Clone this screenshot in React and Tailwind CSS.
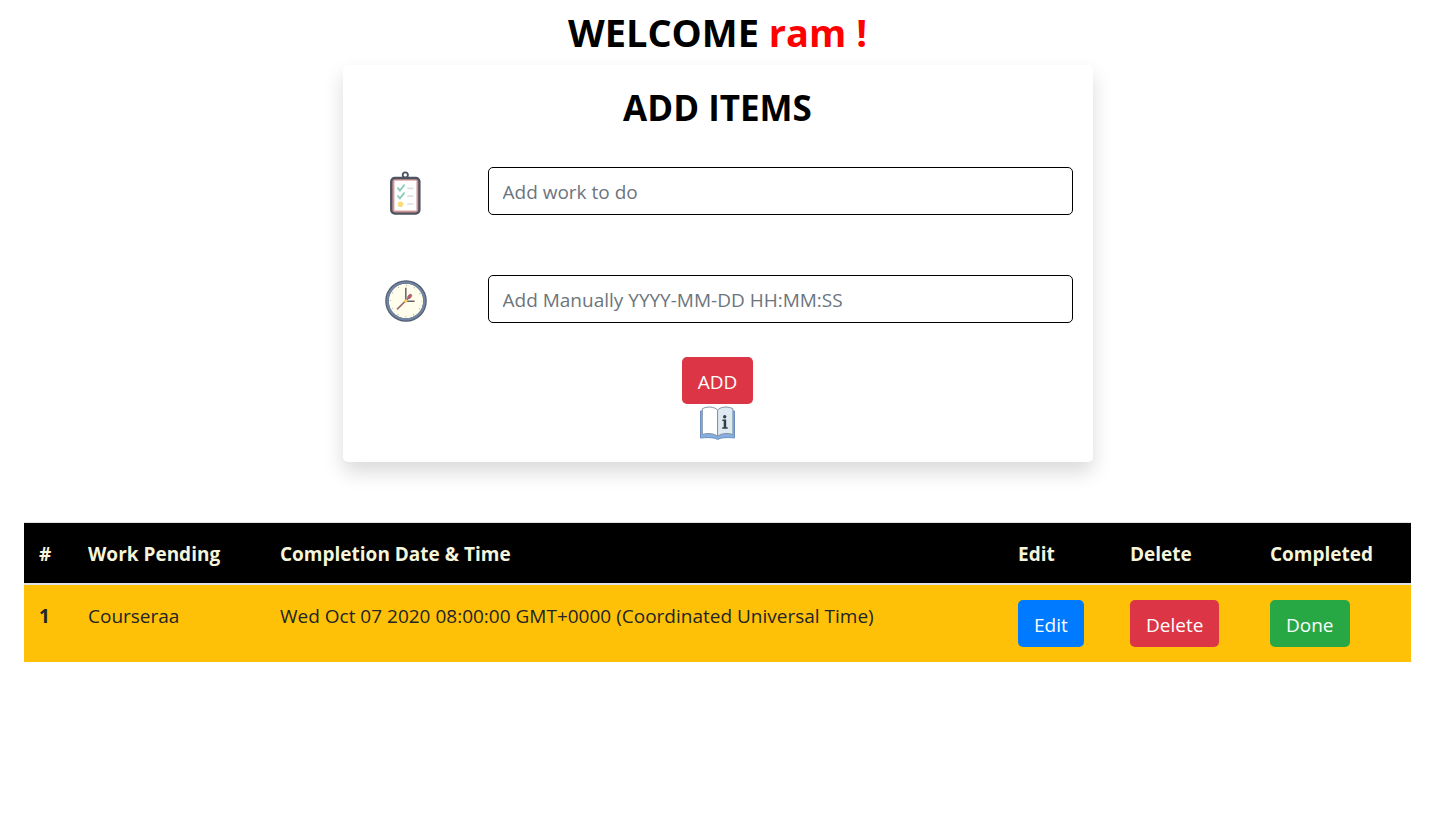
import React from "react";

function ClipboardIcon() {
  return (
    <svg viewBox="-4 0 60 60" className="size-[60px]" aria-hidden="true">
      <circle cx="26.3" cy="14" r="2.6" fill="#fff" stroke="#4c5361" strokeWidth="1.8" />
      <rect x="12.2" y="17" width="28.2" height="35.6" rx="3.6" fill="#c98f8f" stroke="#4c5361" strokeWidth="2.3" />
      <rect x="15.2" y="19.4" width="22.4" height="30.4" rx="0.6" fill="#fff" stroke="#e5b9b7" strokeWidth="0.6" />
      <path d="M18.900 27.200l2 2.300 4.200-5.200M18.900 35l2 2.300 4.200-5.200" fill="none" stroke="#86ccb2" strokeWidth="1.800" strokeLinecap="round" />
      <circle cx="21.500" cy="43.200" r="2.800" fill="#fbdc7c" />
      <path d="M29 27.400h4.600M29 35.200h4.600M29 43h4.600" stroke="#dcdfe2" strokeWidth="1.700" strokeLinecap="round" />
    </svg>
  );
}

function ClockIcon() {
  return (
    <svg viewBox="0 -1 60 60" className="size-[60px]" aria-hidden="true">
      <circle cx="31" cy="31" r="19" fill="#fffdec" stroke="#545d70" strokeWidth="3.6" />
      <circle cx="31" cy="31" r="18.5" fill="none" stroke="#7186a5" strokeWidth="2.2" />
      <circle cx="31" cy="31" r="15.6" fill="none" stroke="#a9a8a0" strokeWidth="1.3" strokeDasharray="0.8 7.368" strokeDashoffset="0.4" />
      <path d="M30.800 31V17.800M30.800 31.200h8.800" fill="none" stroke="#686267" strokeWidth="1.500" />
      <path d="M22 39.400L34 27.500" stroke="#9b6871" strokeWidth="1.600" />
      <ellipse cx="34.700" cy="26.400" rx="2.500" ry="1.600" transform="rotate(-48 34.700 26.400)" fill="#bb6072" stroke="#8d5360" strokeWidth="0.600" />
      <circle cx="30.800" cy="31" r="1.700" fill="#f5cf65" />
    </svg>
  );
}

function GuideIcon() {
  return (
    <svg viewBox="0 0 38 38" className="size-[38px]" aria-hidden="true">
      <path d="M1.500 7v27c5-.6 10.500-.6 14.800.3 1 1.300 3.700 1.300 4.700 0 4.300-.9 9.800-.9 14.500-.3V7z" fill="#86aee0" stroke="#5f86bb" strokeWidth="0.900" />
      <path d="M3.300 4.800C7.500 2.300 15 2.300 18.600 6v26.200C14.500 29.200 8 28.800 3.300 30.600z" fill="#fff" stroke="#8193a5" strokeWidth="1" />
      <path d="M33.900 4.800C29.700 2.300 22.200 2.300 18.600 6v26.200c4.100-3 10.600-3.400 15.300-1.600z" fill="#dfe9f2" stroke="#8193a5" strokeWidth="1" />
      <circle cx="25.700" cy="12.700" r="1.700" fill="#333e48" />
      <path d="M23.300 15.600h3.900v7.600h1.500v1.500h-5.500v-1.500h1.500v-6.100h-1.400z" fill="#333e48" />
    </svg>
  );
}

const fieldClass =
  "h-12 w-full min-w-0 rounded-[5px] border border-black bg-white px-3.5 pt-0.5 text-[19px] text-[#495057] placeholder:text-[#6c757d]";
const buttonClass =
  "h-[47px] cursor-pointer rounded-[5px] px-4 pt-0.5 text-[19px] leading-[30px] text-white";
const textCell = "px-[15px] pt-4 pb-3.5";

const columns = [
  { label: "#", width: "w-[49px]" },
  { label: "Work Pending", width: "w-48" },
  { label: "Completion Date & Time", width: "" },
  { label: "Edit", width: "w-28" },
  { label: "Delete", width: "w-[140px]" },
  { label: "Completed", width: "w-[156px]" },
];

const items = [
  { work: "Courseraa", due: "Wed Oct 07 2020 08:00:00 GMT+0000 (Coordinated Universal Time)" },
];

export default function App() {
  return (
    <main className="min-h-screen bg-white pr-[19px] pl-6 font-['Open_Sans',sans-serif] text-[19px] leading-[30px] text-[#212529]">
      <h1 className="pt-2 text-center text-[38px] leading-12 font-bold text-black">
        WELCOME <span className="text-[#ff0000]">ram !</span>
      </h1>

      <form
        className="mx-auto mt-[9px] flex w-full max-w-[750px] flex-col items-center rounded-[5px] bg-white p-5 shadow-[0_10px_20px_rgba(0,0,0,0.15)]"
        onSubmit={(e) => e.preventDefault()}
      >
        <h2 className="text-[35px] leading-[46px] font-bold text-black">ADD ITEMS</h2>
        <div className="mt-[30px] flex w-full items-center gap-10">
          <label htmlFor="work" aria-label="Work to do" className="flex w-[85px] shrink-0 justify-center">
            <ClipboardIcon />
          </label>
          <input id="work" type="text" placeholder="Add work to do" className={fieldClass} />
        </div>
        <div className="mt-12 flex w-full items-center gap-10">
          <label htmlFor="due" aria-label="Completion date and time" className="flex w-[85px] shrink-0 justify-center">
            <ClockIcon />
          </label>
          <input id="due" type="text" placeholder="Add Manually YYYY-MM-DD HH:MM:SS" className={fieldClass} />
        </div>
        <button type="submit" className={`${buttonClass} mt-7 bg-[#dc3545]`}>
          ADD
        </button>
        <a href="#guide" aria-label="Guide">
          <GuideIcon />
        </a>
      </form>

      <table className="mt-[60px] w-full table-fixed border-separate border-spacing-0 text-left">
        <thead>
          <tr className="bg-black text-[#f5f5dc]">
            {columns.map((c) => (
              <th
                key={c.label}
                scope="col"
                className={`${c.width} ${textCell} border-t border-b-2 border-t-[#dee2e6] border-b-[#dee2e6] font-bold`}
              >
                {c.label}
              </th>
            ))}
          </tr>
        </thead>
        <tbody>
          {items.map((item, i) => (
            <tr key={item.work} className="bg-[#ffc107] align-top">
              <th scope="row" className={`${textCell} font-bold`}>{i + 1}</th>
              <td className={textCell}>{item.work}</td>
              <td className={textCell}>{item.due}</td>
              <td className="p-[15px]">
                <button type="button" className={`${buttonClass} block bg-[#007bff]`}>Edit</button>
              </td>
              <td className="p-[15px]">
                <button type="button" className={`${buttonClass} block bg-[#dc3545]`}>Delete</button>
              </td>
              <td className="p-[15px]">
                <button type="button" className={`${buttonClass} block bg-[#28a745]`}>Done</button>
              </td>
            </tr>
          ))}
        </tbody>
      </table>
    </main>
  );
}
